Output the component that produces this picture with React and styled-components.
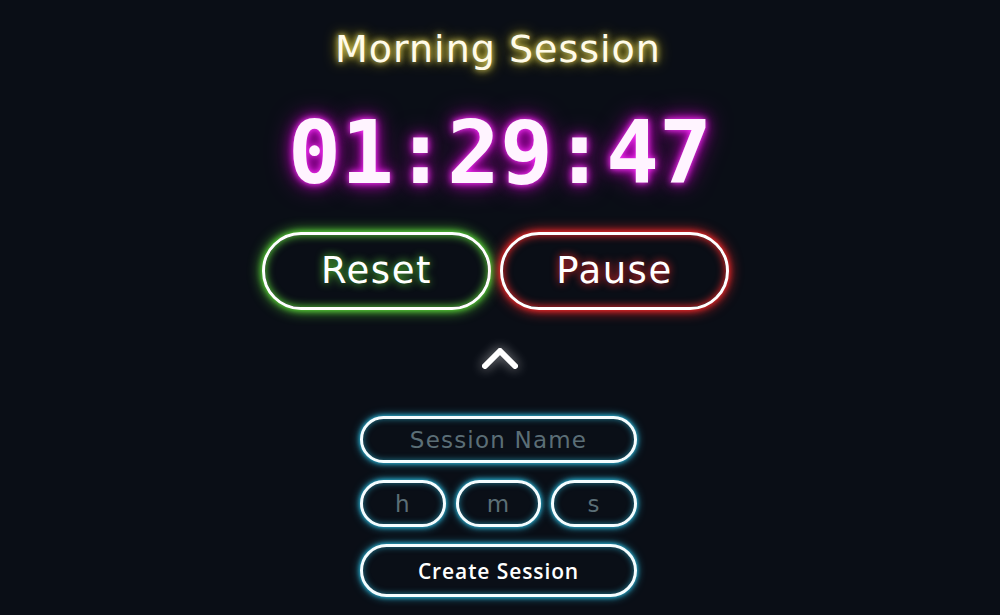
import React, { useState } from 'react'
import styled, { createGlobalStyle } from 'styled-components'

const GlobalStyle = createGlobalStyle`
  html, body {
    margin: 0;
    padding: 0;
    background: #0a0e16;
  }
  body {
    font-family: 'DejaVu Sans', 'Open Sans', sans-serif;
    color: #fff;
  }
`

const Page = styled.main`
  width: 1000px;
  height: 615px;
  overflow: hidden;
  display: flex;
  flex-direction: column;
  align-items: center;
  padding-top: 24px;
  box-sizing: border-box;
`

const Title = styled.h1`
  margin: 0 0 0 -4px;
  font-size: 38px;
  line-height: 50px;
  font-weight: normal;
  letter-spacing: 1px;
  color: #fffbe8;
  text-shadow: 0 0 6px #fff27a, 0 0 14px #c9b400;
`

const Clock = styled.div`
  margin-top: 29px;
  font-family: 'DejaVu Sans Mono', 'Liberation Mono', monospace;
  font-weight: bold;
  font-size: 88px;
  line-height: 100px;
  color: #fff4ff;
  text-shadow: 0 0 6px #ff3cff, 0 0 14px #d000d0, 0 0 26px #8a008a;
`

const Controls = styled.div`
  display: flex;
  gap: 9px;
  margin: 29px 9px 0 0;
`

const glow = {
  green: '#5fe03a',
  red: '#ff2a2a',
  cyan: '#2ec4ea'
}

const PillButton = styled.button`
  width: 229px;
  height: 78px;
  border-radius: 40px;
  background: #0a0e16;
  border: 3px solid #fff;
  color: #fff;
  font-family: 'DejaVu Sans', 'Open Sans', sans-serif;
  font-size: 37px;
  letter-spacing: 1.5px;
  padding: 0 0 2px;
  cursor: pointer;
  box-shadow: 0 0 6px ${({ tone }) => glow[tone]}, 0 0 14px ${({ tone }) => glow[tone]},
    inset 0 0 8px ${({ tone }) => glow[tone]};
  text-shadow: 0 0 8px ${({ tone }) => glow[tone]};
`

const Toggle = styled.button`
  margin-top: 35px;
  background: none;
  border: none;
  padding: 0;
  width: 40px;
  height: 26px;
  display: flex;
  align-items: center;
  justify-content: center;
  cursor: pointer;
  filter: drop-shadow(0 0 6px rgba(255, 255, 255, 0.6));
`

const Form = styled.form`
  margin: 45px 3px 0 0;
  display: flex;
  flex-direction: column;
  gap: 17px;
  width: 277px;
`

const Row = styled.div`
  display: flex;
  gap: 10px;
`

const Field = styled.input`
  ${({ grow }) => grow && 'flex: 1;'}
  width: 100%;
  min-width: 0;
  height: 47px;
  box-sizing: border-box;
  border-radius: 24px;
  border: 3px solid #f4fdff;
  background: #0a0f17;
  color: #fff;
  text-align: center;
  font-family: 'DejaVu Sans', 'Open Sans', sans-serif;
  font-size: 23px;
  letter-spacing: 1.2px;
  outline: none;
  box-shadow: 0 0 5px ${glow.cyan}, 0 0 10px rgba(46, 196, 234, 0.7), inset 0 0 6px rgba(46, 196, 234, 0.6);

  &::placeholder {
    color: #5b6e76;
  }
`

const Submit = styled.button`
  height: 53px;
  border-radius: 27px;
  border: 3px solid #f4fdff;
  background: #0a0f17;
  color: #fff;
  font-family: 'Open Sans', 'Liberation Sans', sans-serif;
  font-size: 21px;
  font-weight: 600;
  letter-spacing: 0.9px;
  cursor: pointer;
  box-shadow: 0 0 5px ${glow.cyan}, 0 0 10px rgba(46, 196, 234, 0.7), inset 0 0 6px rgba(46, 196, 234, 0.6);
`

const App = () => {
  const [open, setOpen] = useState(true)

  return (
    <Page>
      <GlobalStyle />
      <Title>Morning Session</Title>
      <Clock>01:29:47</Clock>
      <Controls>
        <PillButton tone="green">Reset</PillButton>
        <PillButton tone="red">Pause</PillButton>
      </Controls>
      <Toggle onClick={() => setOpen(!open)} aria-label="toggle form">
        <svg width="40" height="26" viewBox="0 0 40 26">
          <polyline
            points={open ? '5,21 20,6 35,21' : '5,6 20,21 35,6'}
            fill="none"
            stroke="#fff"
            strokeWidth="6"
            strokeLinecap="round"
            strokeLinejoin="round"
          />
        </svg>
      </Toggle>
      {open && (
        <Form onSubmit={e => e.preventDefault()}>
          <Field placeholder="Session Name" />
          <Row>
            <Field grow placeholder="h" />
            <Field grow placeholder="m" />
            <Field grow placeholder="s" />
          </Row>
          <Submit type="submit">Create Session</Submit>
        </Form>
      )}
    </Page>
  )
}

export default App
